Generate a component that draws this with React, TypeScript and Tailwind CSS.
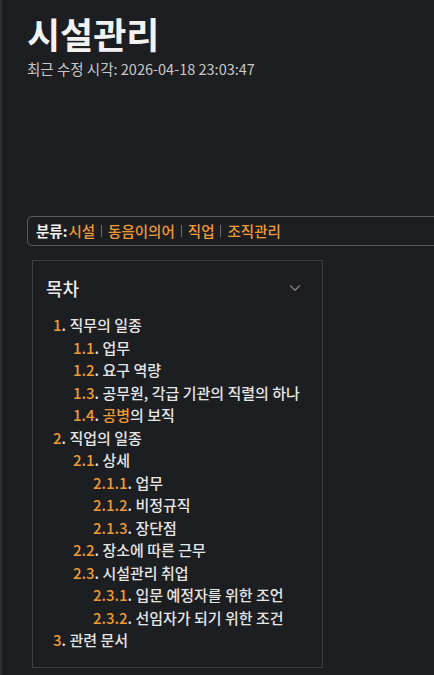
import { ChevronDown } from 'lucide-react'

type TocItem = {
  num: string
  level: number
  parts: { text: string; link?: boolean }[]
}

const toc: TocItem[] = [
  { num: '1', level: 0, parts: [{ text: '직무의 일종' }] },
  { num: '1.1', level: 1, parts: [{ text: '업무' }] },
  { num: '1.2', level: 1, parts: [{ text: '요구 역량' }] },
  { num: '1.3', level: 1, parts: [{ text: '공무원, 각급 기관의 직렬의 하나' }] },
  { num: '1.4', level: 1, parts: [{ text: '공병', link: true }, { text: '의 보직' }] },
  { num: '2', level: 0, parts: [{ text: '직업의 일종' }] },
  { num: '2.1', level: 1, parts: [{ text: '상세' }] },
  { num: '2.1.1', level: 2, parts: [{ text: '업무' }] },
  { num: '2.1.2', level: 2, parts: [{ text: '비정규직' }] },
  { num: '2.1.3', level: 2, parts: [{ text: '장단점' }] },
  { num: '2.2', level: 1, parts: [{ text: '장소에 따른 근무' }] },
  { num: '2.3', level: 1, parts: [{ text: '시설관리 취업' }] },
  { num: '2.3.1', level: 2, parts: [{ text: '입문 예정자를 위한 조언' }] },
  { num: '2.3.2', level: 2, parts: [{ text: '선임자가 되기 위한 조건' }] },
  { num: '3', level: 0, parts: [{ text: '관련 문서' }] },
]

const categories = ['시설', '동음이의어', '직업', '조직관리']

const indent = ['pl-0', 'pl-5', 'pl-10']

export default function App() {
  return (
    <div
      className="min-h-screen w-[434px] h-[675px] overflow-hidden bg-[#1d1e21] border-l-2 border-[#2f3034] text-[#e6e6e6]"
      style={{ fontFamily: '"Noto Sans CJK KR", "Noto Sans", sans-serif' }}
    >
      <div className="pl-[25px]">
        {/* 제목 */}
        <h1 className="pt-[11px] text-[36px] font-bold leading-[44px] text-[#f2f2f2]">시설관리</h1>
        <p className="mt-[4px] text-[14.5px] leading-[20px] text-[#c8c8c8]">최근 수정 시각: 2026-04-18 23:03:47</p>

        {/* 분류 */}
        <div className="mt-[137px] -mr-4 flex h-[30px] items-center rounded-[5px] border border-[#5a5b5f] pl-[8px] text-[14.5px] font-medium">
          <span className="font-bold text-[#f0f0f0]">분류:</span>
          {categories.map((c, i) => (
            <span key={c} className="flex items-center">
              {i > 0 && <span className="mx-[6px] h-[12px] w-px bg-[#6a6a6a]" />}
              <span className={`text-[#ee9b36] ${i === 0 ? 'ml-[1px]' : ''}`}>{c}</span>
            </span>
          ))}
        </div>

        {/* 목차 */}
        <div className="mt-[14px] ml-[5px] w-[291px] border border-[#3d3e42] pl-[13px] pr-[20px] pt-[12px] pb-[15px]">
          <div className="flex items-center justify-between">
            <span className="text-[18px] font-medium leading-[30px] text-[#ececec]">목차</span>
            <ChevronDown className="mr-[-2px] h-[18px] w-[18px] text-[#8a8a8a]" strokeWidth={1.5} />
          </div>
          <ul className="mt-[11px] pl-[7px] text-[15px] font-medium leading-[22.5px]">
            {toc.map((item) => (
              <li key={item.num} className={`${indent[item.level]} whitespace-nowrap`}>
                <span className="text-[#ee9b36]">{item.num}</span>
                <span className="text-[#e6e6e6]">. </span>
                {item.parts.map((p, i) => (
                  <span key={i} className={p.link ? 'text-[#ee9b36]' : 'text-[#e6e6e6]'}>
                    {p.text}
                  </span>
                ))}
              </li>
            ))}
          </ul>
        </div>
      </div>
    </div>
  )
}
